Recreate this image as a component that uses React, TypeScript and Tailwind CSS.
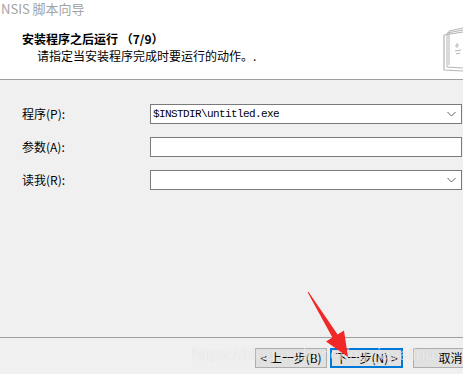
import React from "react";

const cjk = { fontFamily: '"Noto Sans CJK SC", "Liberation Sans", sans-serif' };

function Chevron() {
  return (
    <svg width="9" height="6" viewBox="0 0 9 6" className="shrink-0">
      <path d="M0.5 1 L4.5 5 L8.5 1" fill="none" stroke="#606060" strokeWidth="1" />
    </svg>
  );
}

function Field({ label, value, combo }: { label: string; value?: string; combo?: boolean }) {
  return (
    <div className="flex items-center h-[20px]">
      <div className="w-[150px] shrink-0 pl-[22px] text-[12px] leading-[14px] text-black whitespace-nowrap" style={cjk}>
        {label}
      </div>
      <div className="flex-1 h-[20px] bg-white border border-[#7a7a7a] flex items-center pl-[2px] pr-[5px] mr-px">
        <div
          className="flex-1 text-[11px] tracking-[-0.6px] leading-[14px] text-black"
          style={{ fontFamily: '"Liberation Mono", monospace' }}
        >
          {value}
        </div>
        {combo && <Chevron />}
      </div>
    </div>
  );
}

export default function App() {
  return (
    <div className="relative w-[463px] h-[374px] bg-[#f0f0f0] overflow-hidden flex flex-col" style={cjk}>
      <div className="h-[79px] bg-white flex relative shrink-0">
        <div className="flex-1 flex flex-col">
          <div className="text-[13px] leading-[18px] text-[#a3a3a3] pl-[1px]">NSIS 脚本向导</div>
          <div className="pl-[22px] mt-[13px] font-bold text-[12px] leading-[16px] text-black whitespace-nowrap">
            安装程序之后运行 （7/9）
          </div>
          <div className="pl-[37px] text-[12px] leading-[16px] mt-[1px] text-black whitespace-nowrap">
            请指定当安装程序完成时要运行的动作。.
          </div>
        </div>
        <svg width="20" height="46" viewBox="0 0 20 46" className="absolute right-0 top-[27px]">
          <path d="M6 4 L20 1" stroke="#b4b4b4" strokeWidth="1" fill="none" />
          <path d="M4 6 L20 3" stroke="#b4b4b4" strokeWidth="1" fill="none" />
          <path d="M1 8 L20 5" stroke="#b4b4b4" strokeWidth="1" fill="none" />
          <path d="M1 8 L1 43 L20 44" stroke="#b4b4b4" strokeWidth="1.2" fill="none" />
          <path d="M4 6 L4 40 L20 41" stroke="#b4b4b4" strokeWidth="1" fill="none" />
          <path d="M6 4 L6 38" stroke="#b4b4b4" strokeWidth="1" fill="none" />
          <path d="M12 19 L16 18 M14 16 L14 21 M12 24 L18 23 M13 27 L17 26" stroke="#b4b4b4" strokeWidth="1" fill="none" />
        </svg>
      </div>
      <div className="h-px bg-[#a0a0a0] shrink-0" />
      <div className="flex flex-col gap-[13px] pt-[24px]">
        <Field label="程序(P):" value="$INSTDIR\untitled.exe" combo />
        <Field label="参数(A):" />
        <Field label="读我(R):" combo />
      </div>
      <div className="flex-1" />
      <div className="h-px bg-[#a0a0a0] shrink-0" />
      <div className="h-[36px] flex items-start pt-[10px] pl-[255px] shrink-0">
        <div className="shrink-0 w-[72px] h-[20px] bg-[#e1e1e1] border border-[#adadad] flex items-center justify-center text-[12px] leading-[14px] text-black whitespace-nowrap">
          &lt; 上一步(B)
        </div>
        <div className="shrink-0 ml-[3px] w-[73px] h-[20px] bg-[#e1e1e1] border-2 border-[#0078d7] flex items-center justify-center text-[12px] leading-[14px] text-black whitespace-nowrap">
          下一步(N) &gt;
        </div>
        <div className="shrink-0 ml-[10px] w-[75px] h-[20px] bg-[#e1e1e1] border border-[#adadad] flex items-center justify-center text-[12px] leading-[14px] text-black whitespace-nowrap">
          取消
        </div>
      </div>
      <div
        className="absolute left-[192px] top-[345px] text-[17px] leading-[20px] text-white/60 pointer-events-none whitespace-nowrap"
        style={{ fontFamily: '"Liberation Sans", sans-serif', textShadow: "0 0 1px rgba(0,0,0,0.12)" }}
      >
        https://blog.csdn.net/qq_javalinux
      </div>
      <svg className="absolute left-0 top-0 pointer-events-none" width="463" height="374" viewBox="0 0 463 374">
        <polygon
          points="307.6,292.3 308.4,291.7 337.6,334.4 344,330.5 348,357 326,341.5 332.4,337.6"
          fill="#f02828"
        />
      </svg>
    </div>
  );
}
